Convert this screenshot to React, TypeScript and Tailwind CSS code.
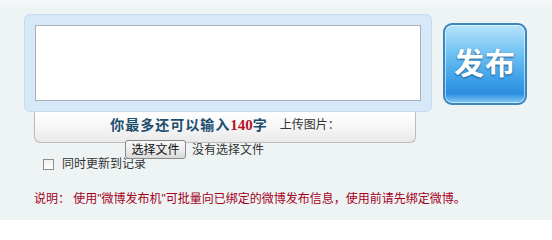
import React from "react";

export default function App() {
  return (
    <div className="w-[552px] h-[220px] overflow-hidden bg-[#eef4f4] font-[family-name:'Liberation_Sans','Noto_Sans_CJK_SC',sans-serif] text-[12px] text-[#333]">
      <div className="h-[7px] bg-[#f4f7f7]" />
      <div className="flex pl-[24px] pt-[7px]">
        <div className="w-[408px]">
          <div className="h-[98px] rounded-[6px] border border-[#c4dbef] bg-[#d7e9f9] p-[10px]">
            <textarea className="block w-full h-full resize-none border border-[#a9b0b8] bg-white outline-none" />
          </div>
          <div className="ml-[10px] w-[382px] h-[31px] rounded-b-[6px] border-x border-b border-[#bcbcbc] bg-[linear-gradient(180deg,#ffffff_0%,#f6f6f6_50%,#e9e9e9_100%)]">
            <div className="h-[26px] flex items-center justify-center whitespace-nowrap">
              <span className="text-[14px] font-bold tracking-[1px] text-[#1e4d6e]">你最多还可以输入</span>
              <span className="text-[15px] font-bold text-[#b5122a] font-[family-name:'Liberation_Serif',serif]">140</span>
              <span className="text-[14px] font-bold text-[#1e4d6e]">字</span>
              <span className="ml-[13px] text-[12px] text-[#333]">上传图片：</span>
            </div>
            <div className="mt-[2px] pl-[90px] flex items-center whitespace-nowrap relative">
              <span className="h-[19px] w-[61px] flex items-center justify-center rounded-[3px] border border-[#8a8a8a] bg-[linear-gradient(180deg,#f7f7f7_0%,#ededed_50%,#dadada_100%)] text-[12px] text-[#111]">选择文件</span>
              <span className="ml-[6px] text-[12px] text-[#333]">没有选择文件</span>
            </div>
          </div>
        </div>
        <div className="ml-[11px] mt-[9px] w-[84px] h-[82px] rounded-[9px] border-2 border-[#3a86bf] bg-[linear-gradient(180deg,#b6e3fb_0%,#7cc8f4_30%,#43a5ea_65%,#2b8ee0_88%,#86cbf3_100%)] shadow-[inset_0_0_0_1px_rgba(255,255,255,0.55)] flex items-center justify-center">
          <span className="text-[30px] font-bold leading-none tracking-[1px] text-white [text-shadow:0_1px_2px_#15578a]">发布</span>
        </div>
      </div>
      <div className="mt-[14px] h-[14px] pl-[43px] flex items-center">
        <span className="w-[11px] h-[11px] border border-[#8e8e8e] bg-[linear-gradient(180deg,#f0f0f0,#ffffff)]" />
        <span className="ml-[8px] text-[12px] text-[#333]">同时更新到记录</span>
      </div>
      <div className="mt-[20px] h-[16px] pl-[34px] flex items-center whitespace-nowrap text-[12px] text-[#a3001c]">
        说明：&nbsp;使用"微博发布机"可批量向已绑定的微博发布信息，使用前请先绑定微博。
      </div>
    </div>
  );
}
